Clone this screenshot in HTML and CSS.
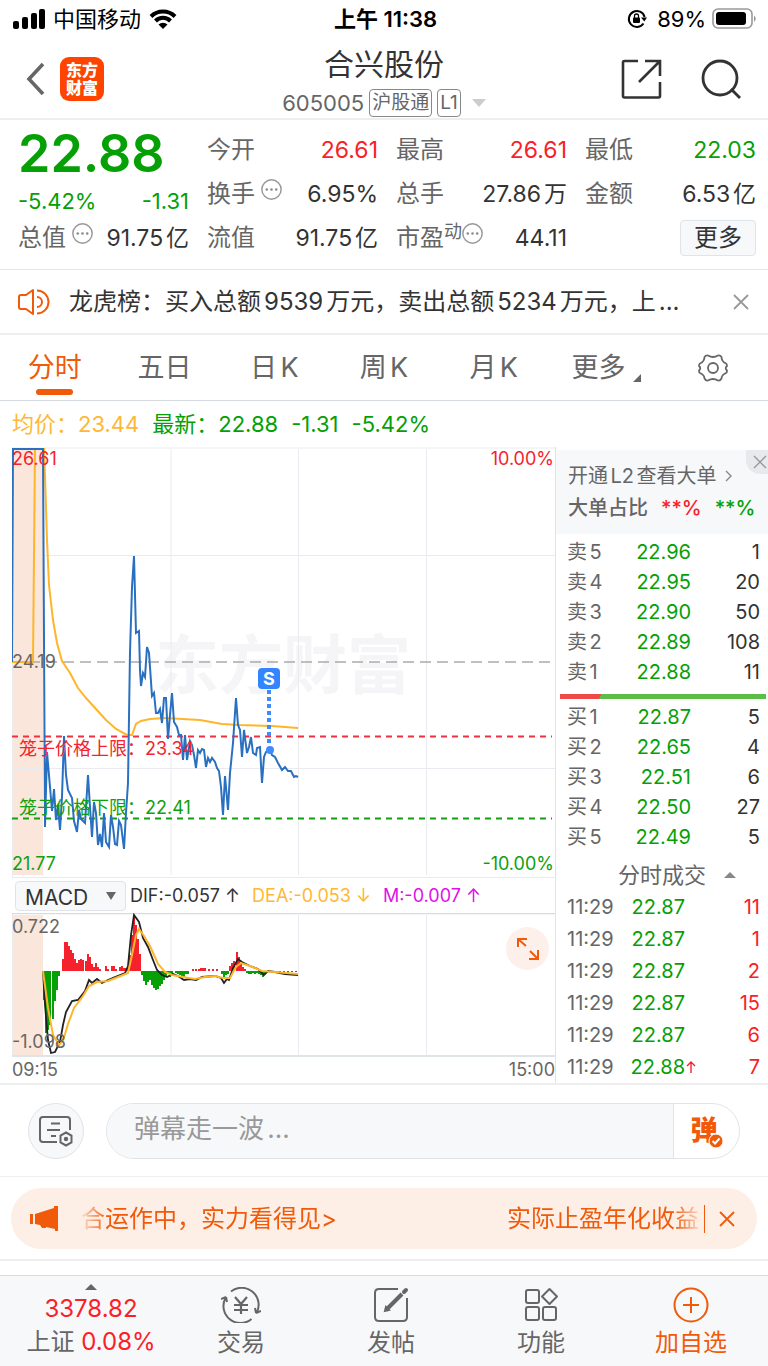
FILE: index.html
```html
<!DOCTYPE html>
<html lang="zh-CN">
<head>
    <meta charset="UTF-8">
    <meta name="viewport" content="width=device-width, initial-scale=1.0">
    <title>合兴股份 605005</title>
    <link rel="stylesheet" href="styles.css">
</head>
<body>

    <!-- Status bar -->
    <div class="status-bar">
        <div class="status-left">
            <svg width="32" height="20" viewBox="0 0 32 20">
                <rect x="0" y="12" width="6" height="8" rx="2"/>
                <rect x="9" y="8" width="6" height="12" rx="2"/>
                <rect x="18" y="4" width="6" height="16" rx="2"/>
                <rect x="26" y="0" width="6" height="20" rx="2"/>
            </svg>
            <span>中国移动</span>
            <svg width="28" height="20" viewBox="0 0 28 20">
                <path d="M2 7.5A17 17 0 0 1 26 7.5M6.5 12A10.5 10.5 0 0 1 21.5 12" fill="none" stroke="#000" stroke-width="4"/>
                <path d="M14 20L9.5 15.5A6.5 6.5 0 0 1 18.5 15.5Z"/>
            </svg>
        </div>
        <strong class="status-time">上午 11:38</strong>
        <div class="status-right">
            <svg width="20" height="20" viewBox="0 0 20 20">
                <path d="M16.5 14.5A8 8 0 1 1 17.6 8" fill="none" stroke="#000" stroke-width="2"/>
                <path d="M14 8.5H20L17.3 12.5Z"/>
                <rect x="6" y="8.5" width="7" height="5.5" rx="1"/>
                <path d="M7.5 9V7a2 2 0 0 1 4 0v2" fill="none" stroke="#000" stroke-width="1.3"/>
            </svg>
            <span>89%</span>
            <svg width="46" height="22" viewBox="0 0 46 22">
                <rect x="1" y="1" width="39" height="19" rx="5" fill="none" stroke="#999" stroke-width="1.6"/>
                <rect x="4" y="4" width="30" height="13" rx="3"/>
                <path d="M42 7.5q3.5 3 0 6.5z" fill="#999"/>
            </svg>
        </div>
    </div>

    <!-- Header -->
    <header class="header">
        <div class="header-side">
            <button class="icon-button" aria-label="返回">
                <svg width="20" height="34" viewBox="0 0 20 34"><path d="M17 2L3 17L17 32" fill="none" stroke="#666" stroke-width="3.6"/></svg>
            </button>
            <div class="logo">东方<br>财富</div>
        </div>
        <div class="header-title">
            <h1>合兴股份</h1>
            <div class="stock-code">
                <span>605005</span>
                <span class="tag">沪股通</span>
                <span class="tag">L1</span>
                <svg class="code-arrow" width="14" height="8" viewBox="0 0 14 8"><path d="M0 0H14L7 8Z" fill="#ccc"/></svg>
            </div>
        </div>
        <div class="header-side header-actions">
            <button class="icon-button" aria-label="分享">
                <svg width="42" height="42" viewBox="0 0 42 42" fill="none" stroke="#333" stroke-width="2.6">
                    <path d="M18 3H4.500Q3 3 3 4.500V38Q3 39.500 4.500 39.500H38.500Q40 39.500 40 38V24"/>
                    <path d="M25 3H40V18M40 3L19 24"/>
                </svg>
            </button>
            <button class="icon-button" aria-label="搜索">
                <svg width="42" height="42" viewBox="0 0 42 42" fill="none" stroke="#333" stroke-width="2.8">
                    <circle cx="20" cy="20" r="17"/><path d="M31 31L40 40"/>
                </svg>
            </button>
        </div>
    </header>

    <!-- Quote -->
    <section class="quote">
        <div class="quote-main green">
            <div class="quote-price">22.88</div>
            <div class="quote-change"><span>-5.42%</span><span>-1.31</span></div>
        </div>
        <div class="stat"><span>今开</span><b class="red">26.61</b></div>
        <div class="stat"><span>最高</span><b class="red">26.61</b></div>
        <div class="stat"><span>最低</span><b class="green">22.03</b></div>
        <div class="stat"><span>换手<svg class="dots" viewBox="0 0 20 20"><use href="#dots"/></svg></span><b>6.95%</b></div>
        <div class="stat"><span>总手</span><b>27.86万</b></div>
        <div class="stat"><span>金额</span><b>6.53亿</b></div>
        <div class="stat"><span>总值<svg class="dots" viewBox="0 0 20 20"><use href="#dots"/></svg></span><b>91.75亿</b></div>
        <div class="stat"><span>流值</span><b>91.75亿</b></div>
        <div class="stat"><span>市盈<sup>动</sup><svg class="dots dots-tight" viewBox="0 0 20 20"><use href="#dots"/></svg></span><b>44.11</b></div>
        <div class="stat stat-more"><button class="more-button">更多</button></div>
    </section>

    <svg class="defs">
        <symbol id="dots" viewBox="0 0 20 20">
            <circle cx="10" cy="10" r="9.2" fill="none" stroke="#999" stroke-width="1.4"/>
            <circle cx="5.500" cy="10" r="1.2" fill="#888"/><circle cx="10" cy="10" r="1.2" fill="#888"/><circle cx="14.500" cy="10" r="1.2" fill="#888"/>
        </symbol>
    </svg>

    <!-- News -->
    <div class="news">
        <svg width="32" height="28" viewBox="0 0 32 28" fill="none" stroke="#f05a0a" stroke-width="2" stroke-linejoin="round">
            <path d="M15 2V26L8 21H3Q1 21 1 19V9Q1 7 3 7H8Z"/>
            <path d="M19 9A5 5 0 0 1 19 19M19 2.500A11.500 11.500 0 0 1 19 25.500"/>
        </svg>
        <a href="#" class="news-text">龙虎榜：买入总额9539万元，卖出总额5234万元，上...</a>
        <button class="icon-button" aria-label="关闭">
            <svg width="16" height="16" viewBox="0 0 16 16"><path d="M1 1L15 15M15 1L1 15" stroke="#999" stroke-width="1.8"/></svg>
        </button>
    </div>

    <!-- Tabs -->
    <nav class="tabs">
        <button class="tab active">分时</button>
        <button class="tab">五日</button>
        <button class="tab">日K</button>
        <button class="tab">周K</button>
        <button class="tab">月K</button>
        <button class="tab tab-more">更多<svg width="8" height="8" viewBox="0 0 8 8"><path d="M8 0V8H0Z" fill="#666"/></svg></button>
        <button class="tab" aria-label="设置">
            <svg width="32" height="30" viewBox="0 0 32 30" fill="none" stroke="#666" stroke-width="1.8" stroke-linejoin="round">
                <path d="M11 2.500Q16 5.500 21 2.500Q23 2 24.500 4Q24.500 8.500 29 10.500Q30 11 30 13Q27.500 15 30 17.500Q30 19.500 29 20Q24.500 22 24.500 25.500Q23 28 21 27.500Q16 24.500 11 27.500Q9 28 7.500 25.500Q7.500 22 3 20Q2 19.500 2 17.500Q4.500 15 2 13Q2 11 3 10.500Q7.500 8.500 7.500 4Q9 2 11 2.500Z"/>
                <circle cx="16" cy="15" r="5"/>
            </svg>
        </button>
    </nav>

    <!-- Chart legend -->
    <div class="legend green">
        <span class="yellow">均价：23.44</span>
        <span>最新：22.88</span>
        <span>-1.31</span>
        <span>-5.42%</span>
    </div>

    <main class="market">
        <div class="charts">
            <!-- Price chart -->
            <svg class="chart" viewBox="12 447 543 430">
                <rect x="12" y="449" width="31" height="426" fill="#fae6da"/>
                <text x="155" y="688" class="watermark">东方财富</text>
                <path class="grid" d="M12 448H555M12 555.500H555M12 768.500H555M12.500 447V877M171 449V875M298.500 449V875M426.500 449V875"/>
                <path d="M12 662H555" stroke="#aaa" stroke-width="1.500" stroke-dasharray="11 6" fill="none"/>
                <path d="M12 736.500H552" stroke="#f03040" stroke-width="2" stroke-dasharray="6 5" fill="none"/>
                <path d="M12 818.500H552" stroke="#10a010" stroke-width="2" stroke-dasharray="6 5" fill="none"/>
                <polyline class="line-avg" points="12,662 33,662 35,449 44,449 45,475 47,540 49,585 53,620 57,643 62,661 70,673 78,688 86,698 96,709 106,720 116,729 127,735 132,735 136,724 141,721 150,719 165,718 200,720 222,724 240,725 272,726 298,728"/>
                <polyline class="line-price" points="12,662 13,449 43,449 45,827 47,752 50,787 52,811 54,789 56,820 58,806 60,830 62,797 64,736 66,775 68,790 72,798 74,821 77,832 79,810 81,819 85,823 88,775 90,807 92,837 94,802 96,813 98,845 100,834 102,847 104,813 106,842 109,847 111,815 113,827 115,844 117,845 119,821 121,825 124,849 126,813 128,783 130,652 132,587 134,556 136,633 139,631 140,670 141,686 143,673 145,677 147,647 149,653 152,696 154,693 156,713 158,713 160,709 162,723 164,698 166,698 168,739 170,715 172,693 174,722 177,727 179,735 181,735 183,760 185,735 187,760 190,741 192,745 194,755 196,768 198,750 200,753 202,749 204,750 206,767 208,758 210,762 212,758 215,762 217,768 219,771 221,787 223,815 225,776 228,810 230,773 233,743 236,698 238,725 240,730 242,757 244,730 247,753 249,747 251,737 253,753 256,755 257,748 260,747 262,783 264,757 266,752 270,750 272,755 275,757 278,763 282,770 285,767 288,771 291,771 294,777 296,776 298,777"/>
                <path d="M269 690V744" stroke="#3d8bff" stroke-width="4" stroke-dasharray="4 3"/>
                <circle cx="270" cy="750" r="4" fill="#3d8bff"/>
                <rect x="258" y="668" width="22" height="21" rx="4" fill="#3385ff"/>
                <text x="269" y="685" class="marker" text-anchor="middle">S</text>
                <text x="12" y="465" class="red">26.61</text>
                <text x="554" y="465" class="red" text-anchor="end">10.00%</text>
                <text x="12" y="668">24.19</text>
                <text x="12" y="870" class="green">21.77</text>
                <text x="554" y="870" class="green" text-anchor="end">-10.00%</text>
                <text x="19" y="755" class="red">笼子价格上限：23.34</text>
                <text x="19" y="814" class="green">笼子价格下限：22.41</text>
            </svg>

            <div class="indicator">
                <span class="select-box">
                    <select aria-label="指标"><option>MACD</option></select>
                    <svg width="10" height="8" viewBox="0 0 10 8"><path d="M0 0H10L5 8Z" fill="#666"/></svg>
                </span>
                <span>DIF:-0.057 ↑</span>
                <span class="yellow">DEA:-0.053 ↓</span>
                <span class="purple">M:-0.007 ↑</span>
            </div>

            <!-- MACD chart -->
            <div class="macd">
                <svg class="chart" viewBox="12 913 543 144">
                    <rect x="12" y="915" width="31" height="140" fill="#fae6da"/>
                    <path class="grid" d="M12.500 913V1056M171 915V1055M298.500 915V1055M426.500 915V1055"/>
                    <path d="M12 913.500H555M12 1056H555" stroke="#d5dbe0" stroke-width="1.500"/>
                    <path class="bars-down" d="M44 971V1000M46 971V1033M48 971V1030M50 971V1025M53 971V1019M55 971V1001M57 971V990M59 971V976M142 971V975M144 971V981M146 971V985M148 971V982M150 971V980M152 971V985M154 971V988M156 971V990M158 971V989M160 971V986M162 971V984M164 971V980M166 971V976M168 971V974M170 971V977M172 971V975M176 971V973M178 971V974M180 971V975M182 971V977M184 971V977M186 971V974M188 971V974M222 971V974M224 971V977M226 971V975M228 971V974M247 971V973M249 971V974M251 971V974M253 971V973M255 971V974M257 971V973M259 971V974M261 971V975M263 971V977M265 971V974M276 971V972M280 971V973M284 971V972M288 971V973M292 971V972M296 971V972"/>
                    <path class="bars-up" d="M63 971V959M65 971V942M67 971V942M69 971V946M71 971V950M73 971V953M75 971V959M77 971V963M79 971V960M81 971V959M83 971V960M86 971V961M88 971V954M90 971V957M92 971V964M94 971V967M96 971V963M98 971V967M100 971V969M106 971V966M108 971V969M112 971V966M114 971V966M116 971V969M120 971V967M122 971V966M124 971V968M126 971V968M128 971V966M130 971V955M132 971V935M134 971V917M136 971V925M138 971V939M140 971V954M193 971V969M196 971V969M199 971V969M201 971V968M203 971V968M205 971V968M209 971V969M213 971V969M217 971V969M230 971V966M232 971V963M234 971V961M237 971V952M239 971V957M241 971V964M243 971V967M245 971V969"/>
                    <polyline points="43,971 45,1005 48,1040 51,1053 55,1052 60,1042 63,1025 66,1012 72,1001 78,1000 85,991 89,980 92,983 97,979 102,983 108,980 115,977 125,973 128,966 131,935 134,915 139,922 143,938 148,947 153,960 157,970 162,975 167,977 173,974 178,976 184,980 190,979 196,980 202,977 215,976 221,978 224,983 227,979 229,980 233,968 238,959 242,962 250,966 258,969 264,975 268,971 275,972 285,974 298,975" fill="none" stroke="#222" stroke-width="1.8"/>
                    <polyline class="line-avg" points="43,971 48,1008 53,1035 59,1045 63,1041 68,1024 74,1008 83,996 89,986 97,982 108,981 118,977 128,973 132,955 136,935 139,929 144,936 150,946 158,964 165,972 172,975 183,977 195,979 205,977 215,976 223,978 230,978 236,967 241,963 250,966 262,971 275,972 298,974"/>
                    <text x="12" y="933">0.722</text>
                    <text x="12" y="1048">-1.098</text>
                </svg>
                <button class="expand-button" aria-label="全屏">
                    <svg width="22" height="22" viewBox="0 0 22 22" fill="none" stroke="#f05a0a" stroke-width="2"><path d="M1 9V1H10M1 1L9 8M12 21H21V12M21 21L13 13"/></svg>
                </button>
            </div>
            <div class="time-axis"><span>09:15</span><span>15:00</span></div>
        </div>

        <!-- Order book -->
        <aside class="side">
            <div class="promo">
                <a href="#">开通L2查看大单<svg width="8" height="12" viewBox="0 0 8 12"><path d="M1 1L6 6L1 11" fill="none" stroke="#888" stroke-width="1.400"/></svg></a>
                <div class="promo-ratio">大单占比<span class="red">**%</span><span class="green">**%</span></div>
                <button class="promo-close" aria-label="关闭">
                    <svg width="14" height="14" viewBox="0 0 14 14"><path d="M1 1L13 13M13 1L1 13" stroke="#999" stroke-width="1.400"/></svg>
                </button>
            </div>
            <table class="orders">
                <tr><th>卖5</th><td>22.96</td><td>1</td></tr>
                <tr><th>卖4</th><td>22.95</td><td>20</td></tr>
                <tr><th>卖3</th><td>22.90</td><td>50</td></tr>
                <tr><th>卖2</th><td>22.89</td><td>108</td></tr>
                <tr><th>卖1</th><td>22.88</td><td>11</td></tr>
            </table>
            <div class="ratio-bar"></div>
            <table class="orders">
                <tr><th>买1</th><td>22.87</td><td>5</td></tr>
                <tr><th>买2</th><td>22.65</td><td>4</td></tr>
                <tr><th>买3</th><td>22.51</td><td>6</td></tr>
                <tr><th>买4</th><td>22.50</td><td>27</td></tr>
                <tr><th>买5</th><td>22.49</td><td>5</td></tr>
            </table>
            <button class="trades-title">分时成交<svg width="12" height="6" viewBox="0 0 12 6"><path d="M0 6H12L6 0Z" fill="#888"/></svg></button>
            <table class="orders trades">
                <tr><th>11:29</th><td>22.87</td><td>11</td></tr>
                <tr><th>11:29</th><td>22.87</td><td>1</td></tr>
                <tr><th>11:29</th><td>22.87</td><td>2</td></tr>
                <tr><th>11:29</th><td>22.87</td><td>15</td></tr>
                <tr><th>11:29</th><td>22.87</td><td>6</td></tr>
                <tr><th>11:29</th><td>22.88<svg class="tick-up" width="10" height="12" viewBox="0 0 10 12"><path d="M5 12V1M1 5L5 1L9 5" fill="none" stroke="#f5222d" stroke-width="1.400"/></svg></td><td>7</td></tr>
            </table>
        </aside>
    </main>

    <!-- Comment bar -->
    <div class="comment-bar">
        <button class="comment-settings" aria-label="弹幕设置">
            <svg width="36" height="32" viewBox="0 0 36 32" fill="none" stroke="#666" stroke-width="2">
                <path d="M19 27H5Q2 27 2 24V5Q2 2 5 2H29Q32 2 32 5V15M13 8.500H22M9 15H22M13 21H18"/>
                <path d="M28 18.500L33.500 21.500V28.500L28 31.500L22.500 28.500V21.500Z" transform="translate(0 -1)"/>
                <circle cx="28" cy="24" r="1.200" fill="#666"/>
            </svg>
        </button>
        <form class="comment-form">
            <input type="text" placeholder="弹幕走一波..." aria-label="弹幕">
            <button type="button" class="comment-toggle" aria-label="弹幕开关">
                弹<svg width="16" height="16" viewBox="0 0 16 16"><circle cx="8" cy="8" r="7" fill="#f05a0a" stroke="#fff" stroke-width="1"/><path d="M4.500 8L7 10.500L11.500 5.500" fill="none" stroke="#fff" stroke-width="2"/></svg>
            </button>
        </form>
    </div>

    <!-- Banner -->
    <div class="banner-wrap">
        <div class="banner">
            <svg width="28" height="26" viewBox="0 0 28 26" fill="#f05a0a">
                <path d="M0 8H3V18H0ZM5 8L24 2V0H28V25H25V23L16 21V22H12L10 19L5 18Z"/>
            </svg>
            <div class="banner-text"><a href="#">合运作中，实力看得见&gt;</a><a href="#">实际止盈年化收益</a></div>
            <button class="icon-button banner-close" aria-label="关闭">
                <svg width="16" height="16" viewBox="0 0 16 16"><path d="M1 1L15 15M15 1L1 15" stroke="#f05a0a" stroke-width="1.800"/></svg>
            </button>
        </div>
    </div>

    <!-- Bottom navigation -->
    <nav class="bottom-nav">
        <a href="#" class="index-link">
            <svg width="12" height="6" viewBox="0 0 12 6"><path d="M0 6H12L6 0Z" fill="#666"/></svg>
            <span class="red">3378.82</span>
            <span>上证 <span class="red">0.08%</span></span>
        </a>
        <a href="#">
            <svg width="40" height="36" viewBox="0 0 40 36" fill="none" stroke="#666" stroke-width="2">
                <path d="M10 4.500A17 17 0 0 1 35.500 26M35 26L34 21M35 26L40 24"/>
                <path d="M30.500 32A17 17 0 0 1 4.500 11M5 10L6 15M5 10L0 12"/>
                <path d="M14 10L20 17L26 10M20 17V27M13 18H27M13 23H27" stroke-width="2.200"/>
            </svg>
            <span>交易</span>
        </a>
        <a href="#">
            <svg width="36" height="36" viewBox="0 0 36 36" fill="none" stroke="#666" stroke-width="2">
                <path d="M25 2H6Q2 2 2 6V30Q2 34 6 34H30Q34 34 34 30V11"/>
                <path d="M13 23L29 7" stroke-width="4"/><path d="M31 5L33 3" stroke-width="4" stroke-linecap="round"/><path d="M12 24L13 20L16 23Z" fill="#666"/>
            </svg>
            <span>发帖</span>
        </a>
        <a href="#">
            <svg width="36" height="36" viewBox="0 0 36 36" fill="none" stroke="#666" stroke-width="2">
                <rect x="3" y="3" width="13" height="13" rx="2"/><rect x="3" y="20" width="13" height="13" rx="2"/><rect x="20" y="20" width="13" height="13" rx="2"/>
                <path d="M26.500 2L34 9.500L26.500 17L19 9.500Z" stroke-linejoin="round"/>
            </svg>
            <span>功能</span>
        </a>
        <a href="#" class="active">
            <svg width="36" height="36" viewBox="0 0 36 36" fill="none" stroke="#f05a0a" stroke-width="2">
                <circle cx="18" cy="18" r="16.500"/><path d="M18 10V26M10 18H26"/>
            </svg>
            <span>加自选</span>
        </a>
    </nav>

</body>
</html>
```
FILE: styles.css
```css
* {
    box-sizing: border-box;
}
body {
    font-family: Inter, "Noto Sans CJK SC", sans-serif;
    margin: 0;
    background: #ffffff;
    color: #333333;
    font-size: 22px;
    line-height: 32px;
    text-autospace: normal;
}
button {
    font: inherit;
    color: inherit;
    background: none;
    border: none;
    padding: 0;
    cursor: pointer;
}
a {
    color: inherit;
    text-decoration: none;
}
svg {
    display: block;
    flex: none;
}
.defs {
    position: absolute;
    width: 0;
    height: 0;
}
.red {
    color: #fa2028;
    fill: #f5222d;
}
.green {
    color: #05a005;
    fill: #10a010;
}
.yellow {
    color: #ffb835;
}
.purple {
    color: #e010e8;
}

/* Status bar */
.status-bar {
    display: grid;
    grid-template-columns: 1fr auto 1fr;
    align-items: center;
    height: 38px;
    padding: 0 10px 0 13px;
    color: #000000;
}
.status-left, .status-right {
    display: flex;
    align-items: center;
    gap: 8px;
}
.status-right {
    justify-content: flex-end;
    gap: 6px;
}
.status-right svg:first-child {
    margin-right: 4px;
}
.status-time {
    font-weight: 600;
}

/* Header */
.header {
    display: grid;
    grid-template-columns: 1fr auto 1fr;
    height: 82px;
    padding: 0 26px;
    border-bottom: 2px solid #eeeeee;
}
.header-side {
    display: flex;
    align-items: center;
    gap: 14px;
}
.header-actions {
    justify-content: flex-end;
    gap: 38px;
}
.logo {
    background: #ff4400;
    color: #ffffff;
    width: 44px;
    height: 44px;
    border-radius: 9px;
    padding-top: 4px;
    font-size: 16px;
    line-height: 18px;
    font-weight: 900;
    text-align: center;
}
.header-title h1 {
    margin: 6px 0 3px;
    font-size: 30px;
    line-height: 40px;
    font-weight: 400;
    text-align: center;
}
.stock-code {
    display: flex;
    align-items: center;
    gap: 5px;
    color: #666666;
}
.tag {
    border: 1px solid #888888;
    border-radius: 4px;
    font-size: 19px;
    line-height: 26px;
    padding: 0 2px;
}
.code-arrow {
    margin-left: 6px;
}

/* Quote */
.quote {
    display: grid;
    grid-template-columns: repeat(4, 1fr);
    grid-auto-rows: 44px;
    column-gap: 18px;
    padding: 8px 12px 9px 18px;
    border-bottom: 1px solid #e5e5e5;
}
.quote-main {
    grid-row: span 2;
}
.quote-price {
    font-size: 52px;
    line-height: 52px;
    font-weight: 600;
}
.quote-change {
    display: flex;
    justify-content: space-between;
    padding-top: 5px;
}
.stat {
    display: flex;
    align-items: center;
    justify-content: space-between;
    font-size: 24px;
    color: #666666;
}
.stat > span {
    display: flex;
}
.stat b {
    font-weight: 400;
    font-size: 23px;
}
.stat b:not(.red):not(.green) {
    color: #333333;
}
.stat sup {
    font-size: 18px;
    line-height: 20px;
}
.dots {
    width: 21px;
    height: 21px;
    margin: 1px 0 0 6px;
}
.dots-tight {
    margin-left: 0;
}
.stat-more {
    justify-content: flex-end;
}
.more-button {
    width: 76px;
    height: 36px;
    background: #f7f8fa;
    border: 1px solid #e0e3e8;
    border-radius: 4px;
    color: #333333;
}

/* News */
.news {
    display: flex;
    align-items: center;
    height: 65px;
    padding: 0 19px 0 18px;
    border-bottom: 2px solid #eeeeee;
    font-size: 24px;
}
.news-text {
    flex: 1;
    margin-left: 19px;
    white-space: nowrap;
    overflow: hidden;
    text-overflow: ellipsis;
}

/* Tabs */
.tabs {
    display: grid;
    grid-template-columns: repeat(7, 1fr);
    height: 66px;
    border-bottom: 1px solid #d5dbe0;
}
.tab {
    display: flex;
    align-items: center;
    justify-content: center;
    border: solid transparent;
    border-width: 6px 0;
    font-size: 27px;
    color: #666666;
}
.tab.active {
    position: relative;
    color: #f05a0a;
}
.tab.active::after {
    content: "";
    position: absolute;
    bottom: -1px;
    width: 37px;
    height: 6px;
    border-radius: 3px;
    background: #f05a0a;
}
.tab-more {
    padding-left: 6px;
}
.tab-more svg {
    margin: 20px 0 0 8px;
}

.legend {
    display: flex;
    align-items: center;
    gap: 13px;
    height: 46px;
    padding-left: 12px;
}

/* Charts */
.market {
    display: grid;
    grid-template-columns: 543fr 213fr;
    padding-left: 12px;
    border-bottom: 2px solid #eeeeee;
}
.chart {
    width: 100%;
    height: auto;
    font-size: 18px;
}
.chart text {
    fill: #666666;
}
.chart text.red {
    fill: #f5222d;
}
.chart text.green {
    fill: #10a010;
}
.chart text.watermark {
    fill: #f5f5f7;
    font-size: 64px;
    font-weight: 700;
}
.chart text.marker {
    fill: #ffffff;
    font-weight: 700;
}
.grid {
    fill: none;
    stroke: #e9ebf0;
    stroke-width: 1;
}
.line-avg {
    fill: none;
    stroke: #ffb52b;
    stroke-width: 2;
}
.line-price {
    fill: none;
    stroke: #2a70c0;
    stroke-width: 2;
}
.bars-up {
    stroke: #f5222d;
    stroke-width: 2;
}
.bars-down {
    stroke: #05a005;
    stroke-width: 2;
}
.indicator {
    display: flex;
    align-items: center;
    gap: 12px;
    height: 36px;
    padding-left: 3px;
    border-top: 1px solid #e9ebf0;
    font-size: 18px;
    white-space: nowrap;
}
.select-box {
    position: relative;
    margin-right: -8px;
}
.select-box svg {
    position: absolute;
    right: 10px;
    top: 11px;
    pointer-events: none;
}
.select-box select {
    appearance: none;
    display: block;
    width: 111px;
    height: 30px;
    padding: 0 9px;
    font: inherit;
    font-size: 21px;
    color: #333333;
    background: #f7f8fa;
    border: 1px solid #e0e3e8;
    border-radius: 4px;
}
.macd {
    position: relative;
}
.expand-button {
    position: absolute;
    top: 14px;
    right: 6px;
    width: 43px;
    height: 43px;
    border-radius: 50%;
    background: #fdf0ea;
    display: flex;
    align-items: center;
    justify-content: center;
}
.time-axis {
    display: flex;
    justify-content: space-between;
    font-size: 18px;
    line-height: 26px;
    color: #666666;
}

/* Order book */
.side {
    border-left: 1px solid #e0e3e8;
}
.promo {
    position: relative;
    margin-top: 3px;
    padding: 10px 12px;
    height: 84px;
    background: #f7f8fa;
    font-size: 20px;
    color: #666666;
}
.promo a {
    display: flex;
    align-items: center;
    gap: 8px;
}
.promo-ratio {
    display: flex;
    gap: 13px;
    font-weight: 500;
}
.promo-close {
    position: absolute;
    top: 0;
    right: 0;
    width: 22px;
    height: 24px;
    padding-left: 7px;
    border-bottom-left-radius: 14px;
    background: #e8e9ec;
}
.orders {
    width: 100%;
    border-collapse: collapse;
    table-layout: fixed;
    margin: 3px 0 7px;
    font-size: 20px;
    line-height: 30px;
}
.orders th, .orders td {
    padding: 0 8px 0 0;
    font-weight: 400;
    text-align: right;
}
.orders th {
    width: 60px;
    padding: 0 0 0 11px;
    text-align: left;
    color: #666666;
}
.orders td:nth-child(2) {
    width: 75px;
    padding: 0;
    color: #05a005;
}
.ratio-bar {
    height: 5px;
    margin: 0 2px 0 4px;
    background: linear-gradient(120deg, #f04848 20%, #5abe46 20%);
}
.trades-title {
    display: flex;
    align-items: center;
    gap: 18px;
    margin-left: 62px;
    color: #666666;
}
.trades {
    margin: 0;
    line-height: 32px;
}
.trades th {
    width: 66px;
}
.trades td:nth-child(2) {
    width: 63px;
    position: relative;
}
.trades td:last-child {
    color: #fa2028;
}
.tick-up {
    position: absolute;
    left: 64px;
    top: 10px;
}

/* Comment bar */
.comment-bar {
    display: flex;
    gap: 22px;
    padding: 18px 28px 17px;
    border-bottom: 1px solid #f0f0f0;
}
.comment-settings {
    display: flex;
    align-items: center;
    justify-content: center;
    width: 56px;
    height: 56px;
    border: 1px solid #e0e3e8;
    border-radius: 50%;
    background: #f7f8fa;
}
.comment-form {
    display: flex;
    flex: 1;
    height: 56px;
    border: 1px solid #e0e3e8;
    border-radius: 28px;
    overflow: hidden;
}
.comment-form input {
    flex: 1;
    min-width: 0;
    padding: 0 27px 4px;
    border: none;
    background: #f7f8fa;
    font: inherit;
    font-size: 26px;
}
.comment-form input::placeholder {
    color: #999999;
}
.comment-toggle {
    position: relative;
    width: 66px;
    padding-right: 5px;
    border-left: 1px solid #e0e3e8;
    color: #f05a0a;
    font-size: 27px;
    font-weight: 900;
}
.comment-toggle svg {
    position: absolute;
    right: 15px;
    bottom: 9px;
}

/* Banner */
.banner-wrap {
    padding: 11px 11px 10px;
    border-bottom: 2px solid #eeeeee;
}
.banner {
    display: flex;
    align-items: center;
    height: 61px;
    padding: 0 22px 0 19px;
    border-radius: 31px;
    background: #fdeee6;
    color: #f05a0a;
    font-size: 24px;
}
.banner-text {
    display: flex;
    flex: 1;
    justify-content: space-between;
    margin-left: 20px;
    padding: 0 5px 0 3px;
    white-space: nowrap;
    -webkit-mask-image: linear-gradient(90deg, transparent, #000 30px, #000 calc(100% - 30px), transparent);
    mask-image: linear-gradient(90deg, transparent, #000 30px, #000 calc(100% - 30px), transparent);
}
.banner-close {
    height: 28px;
    padding-left: 14px;
    border-left: 1px solid #f05a0a;
}

/* Bottom navigation */
.bottom-nav {
    display: grid;
    grid-template-columns: repeat(5, 1fr);
    margin-top: 14px;
    height: 91px;
    padding: 0 2px 0 16px;
    border-top: 1px solid #d5dbe0;
    background: #f7f8fa;
}
.bottom-nav a {
    display: flex;
    flex-direction: column;
    align-items: center;
    padding-top: 11px;
    gap: 4px;
    font-size: 24px;
    color: #666666;
}
.bottom-nav a.active {
    color: #f05a0a;
}
.bottom-nav .index-link {
    padding-top: 8px;
    gap: 5px;
}
.index-link > span {
    line-height: 28px;
}
```
